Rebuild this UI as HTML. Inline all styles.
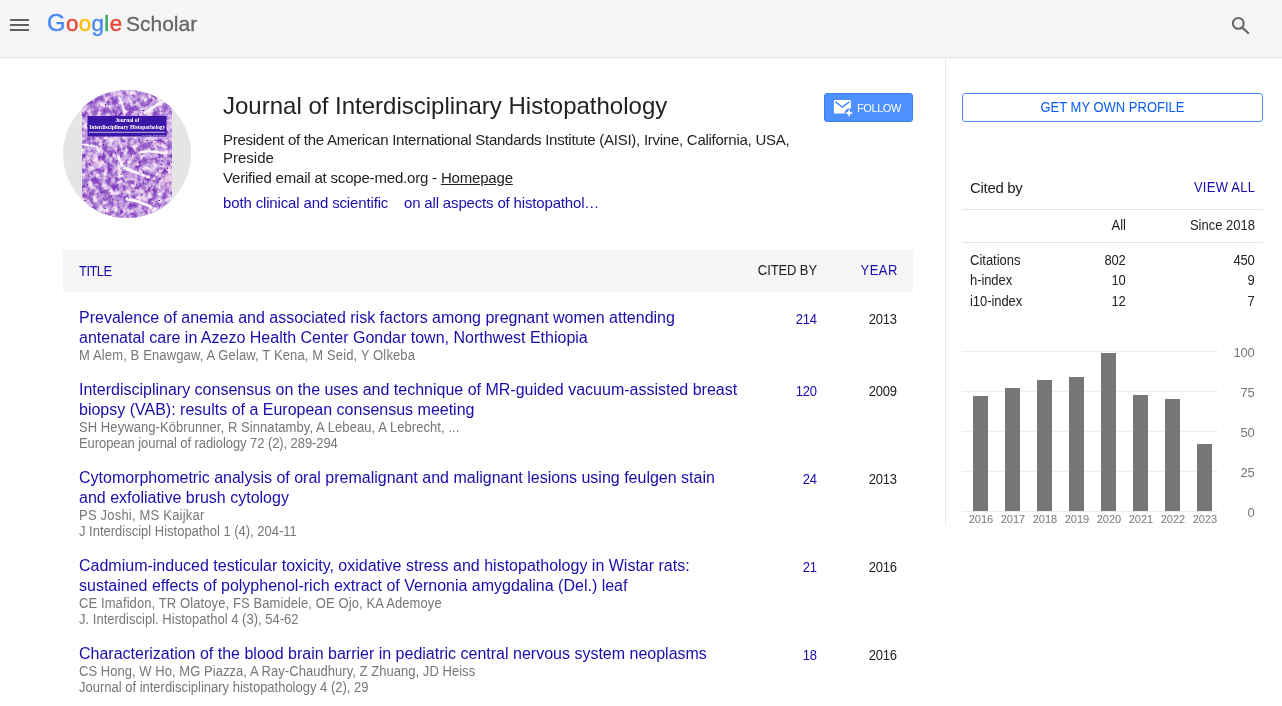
<!DOCTYPE html>
<html lang="en">
<head>
<meta charset="utf-8">
<title>Journal of Interdisciplinary Histopathology - Google Scholar</title>
<style>
html,body{margin:0;padding:0;background:#fff;}
body{opacity:0.999;width:1282px;height:706px;overflow:hidden;position:relative;font-family:"Liberation Sans",sans-serif;font-size:13px;color:#222;}
a{text-decoration:none;color:#1a0dab;}
.abs{position:absolute;white-space:nowrap;}
#hdr{position:absolute;left:0;top:0;width:1282px;height:57px;background:#f5f5f5;border-bottom:1px solid #e5e5e5;}
#logo{position:absolute;left:47px;top:0;height:57px;white-space:nowrap;}
#logo .g{position:absolute;left:0;top:8px;font-size:22.3px;line-height:30px;letter-spacing:0.4px;color:transparent;-webkit-text-stroke:0.42px transparent;background:linear-gradient(90deg,#4285f4 0px 18.6px,#ea4335 18.6px 31.4px,#fbbc05 31.4px 44.2px,#4285f4 44.2px 57.0px,#34a853 57.0px 62.4px,#ea4335 62.4px 100px);-webkit-background-clip:text;background-clip:text;padding-right:3px;}
#logo .g::first-letter{font-size:23.8px;}
#logo .s{position:absolute;left:79px;top:9px;font-size:21px;line-height:30px;color:#666;-webkit-text-stroke:0.3px #666;}
#vdiv{position:absolute;left:945px;top:58px;width:1px;height:468px;background:#ebebeb;}
/* profile */
#name{left:223px;top:90px;font-size:24px;line-height:32px;color:#222;}
.il{left:223px;font-size:15px;line-height:18px;color:#222;}
#follow{position:absolute;left:824px;top:93px;width:87px;height:27px;border:1px solid #3b80f2;border-radius:3px;background:#4d90fe;color:#fff;}
#follow span{position:absolute;left:32px;top:1px;line-height:27px;font-size:11px;letter-spacing:-0.42px;}
#getprof{position:absolute;left:962px;top:93px;width:299px;height:27px;border:1px solid #4d90fe;border-radius:3px;text-align:center;line-height:27px;font-size:13px;color:#0d5df4;}
/* table */
#thead{position:absolute;left:63px;top:250px;width:850px;height:42px;background:#f5f5f5;}
.row{position:absolute;left:63px;width:850px;}
.row .t{position:absolute;left:16px;top:8px;width:662px;font-size:16px;line-height:20px;color:#1a0dab;}
.row .g{color:#777;font-size:13px;line-height:16px;white-space:nowrap;transform:scaleY(1.07);transform-origin:0 12.5px;}
.row .c{position:absolute;right:96.3px;top:12px;letter-spacing:-0.23px;line-height:16px;color:#1a0dab;}
.row .y{position:absolute;right:16.3px;top:12px;letter-spacing:-0.23px;line-height:16px;color:#222;}
/* right */
.hl{position:absolute;left:962px;width:301px;height:1px;background:#e5e5e5;}
.r1{right:156px;}
.r2{right:27px;}
.num{letter-spacing:-0.23px;margin-right:0.5px;}
.sy,.row .c,.row .y{transform:scaleY(1.07);transform-origin:0 12.5px;}
/*CAL*/
#p1{letter-spacing:-0.260px}
#p3{letter-spacing:-0.187px}
#i1{letter-spacing:-0.144px}
#i2{letter-spacing:-0.165px}
#th1{letter-spacing:-0.55px}
#g1{letter-spacing:0.131px}
#g2{letter-spacing:0.068px}
#g3{letter-spacing:-0.080px}
#g4{letter-spacing:0.205px}
#g5{letter-spacing:-0.005px}
#g6{letter-spacing:0.096px}
#g7{letter-spacing:0.015px}
#g8{letter-spacing:0.044px}
#g9{letter-spacing:-0.007px}
#cb{letter-spacing:-0.314px}
#hi{letter-spacing:-0.083px}
#ii{letter-spacing:-0.062px}
/*ENDCAL*/
</style>
</head>
<body>
<div id="hdr">
  <svg class="abs" style="left:0;top:0" width="40" height="57" viewBox="0 0 40 57"><path d="M10 19h19v2H10zM10 24h19v2H10zM10 29h19v2H10z" fill="#606060"/></svg>
  <div id="logo"><span class="g">Google</span><span class="s">Scholar</span></div>
  <svg class="abs" style="left:1226px;top:11px" width="30" height="30" viewBox="0 0 30 30"><circle cx="12.3" cy="12.4" r="5.4" fill="none" stroke="#666" stroke-width="2"/><path d="M16.4 16.6l5.8 5.4" stroke="#666" stroke-width="2.2" stroke-linecap="round"/></svg>
</div>
<div id="vdiv"></div>

<svg id="ava" class="abs" style="left:63px;top:90px" width="128" height="128" viewBox="0 0 128 128">
  <defs>
    <clipPath id="cc"><circle cx="64" cy="64" r="64"/></clipPath>
    <clipPath id="ci2"><rect x="19" y="0" width="90" height="128"/></clipPath>
    <filter id="tex" x="0" y="0" width="100%" height="100%" color-interpolation-filters="sRGB">
      <feTurbulence type="fractalNoise" baseFrequency="0.16 0.14" numOctaves="3" seed="11"/>
      <feColorMatrix type="matrix" values="0 0 0 0 0.50  0 0 0 0 0.22  0 0 0 0 0.74  2.6 0 0 0 -1.0"/>
    </filter>
    <filter id="lite" x="0" y="0" width="100%" height="100%" color-interpolation-filters="sRGB">
      <feTurbulence type="fractalNoise" baseFrequency="0.2 0.17" numOctaves="2" seed="29"/>
      <feColorMatrix type="matrix" values="0 0 0 0 0.98  0 0 0 0 0.91  0 0 0 0 0.97  0 3 0 0 -1.25"/>
    </filter>
    <filter id="dots" x="0" y="0" width="100%" height="100%" color-interpolation-filters="sRGB">
      <feTurbulence type="fractalNoise" baseFrequency="0.5" numOctaves="1" seed="3"/>
      <feColorMatrix type="matrix" values="0 0 0 0 0.32  0 0 0 0 0.10  0 0 0 0 0.55  9 0 0 0 -6.2"/>
    </filter>
    <filter id="b1" x="-10%" y="-10%" width="120%" height="120%"><feGaussianBlur stdDeviation="1.1"/></filter>
    <filter id="b2" x="-10%" y="-10%" width="120%" height="120%"><feGaussianBlur stdDeviation="0.5"/></filter>
  </defs>
  <g clip-path="url(#cc)">
    <rect width="128" height="128" fill="#e5e5e5"/>
    <g clip-path="url(#ci2)">
      <rect x="19" y="0" width="90" height="128" fill="#cbaae6"/>
      <g filter="url(#b1)" fill="#e9c3e2" opacity="0.85">
        <ellipse cx="31" cy="71" rx="9" ry="5"/><ellipse cx="74" cy="97" rx="16" ry="3.5" transform="rotate(14 74 97)"/><ellipse cx="103" cy="88" rx="6" ry="12"/><ellipse cx="45" cy="104" rx="8" ry="4" transform="rotate(35 45 104)"/><ellipse cx="90" cy="53" rx="10" ry="3"/>
      </g>
      <g filter="url(#b1)" fill="none" stroke="#8347c0" stroke-linecap="round" opacity="0.75">
        <path d="M47 76 Q45 62 57 60 Q70 60 73 72 Q77 84 96 90" stroke-width="7"/>
        <path d="M52 88 Q72 92 98 104" stroke-width="7"/>
        <path d="M72 58 Q88 52 106 57" stroke-width="6"/>
        <path d="M76 70 Q92 72 107 68" stroke-width="5"/>
        <path d="M22 82 Q40 98 58 124" stroke-width="7"/>
        <path d="M36 80 Q52 96 72 122" stroke-width="6"/>
        <path d="M58 102 Q80 112 100 126" stroke-width="7"/>
        <path d="M21 50 Q36 50 44 60" stroke-width="6"/>
        <path d="M20 96 Q30 108 36 126" stroke-width="6"/>
        <path d="M24 12 Q40 4 52 14 T78 12" stroke-width="8"/>
        <path d="M22 24 Q50 18 74 26" stroke-width="6"/>
        <path d="M84 8 Q96 2 108 0" stroke-width="6"/>
        <path d="M92 24 Q100 18 108 16" stroke-width="5"/>
      </g>
      <rect x="19" y="0" width="90" height="128" filter="url(#tex)"/>
      <rect x="19" y="0" width="90" height="128" filter="url(#lite)"/>
      <g filter="url(#b2)" fill="none" stroke="#fbf3fb" stroke-linecap="round" stroke-linejoin="round">
        <path d="M55.5 67 Q57 74 62 78.5 Q72 82 86 87.5" stroke-width="2.4"/>
        <path d="M62 78.5 Q66 79 69 81" stroke-width="3.6"/>
        <path d="M78 62 Q90 60.5 103 63.5" stroke-width="2.6"/>
        <path d="M20 54.5 Q28 55 34 57 L36 62" stroke-width="2"/>
        <path d="M64 109 Q76 111 88 117" stroke-width="3"/>
        <path d="M82 23 Q94 14 109 7" stroke-width="3"/>
        <path d="M56 7 Q60 14 61 21" stroke-width="1.8"/>
        <path d="M30 120 Q36 123 40 128" stroke-width="2"/>
      </g>
      <rect x="19" y="0" width="90" height="128" filter="url(#dots)"/>
    </g>
    <rect x="24.5" y="26" width="79" height="20.5" fill="#3c16a6"/>
    <rect x="26" y="41.8" width="76" height="0.9" fill="#d9ccf2"/>
    <g fill="#ffffff" font-family="Liberation Serif, serif" font-weight="bold" text-anchor="middle">
      <text x="64.3" y="32.4" font-size="5.4">Journal of</text>
      <text x="64.3" y="38.6" font-size="5.4" textLength="76" lengthAdjust="spacingAndGlyphs">Interdisciplinary Histopathology</text>
      <text x="102" y="45.7" font-size="2.8" text-anchor="end" fill="#cfc0f0">E-ISSN: 2146-8362</text>
    </g>
  </g>
</svg>
<div id="name" class="abs">Journal of Interdisciplinary Histopathology</div>
<div class="abs il" style="top:131px;white-space:normal;width:590px"><span id="p1">President of the American International Standards Institute (AISI), Irvine, California, USA,</span> Preside</div>
<div class="abs il" id="p3" style="top:169px">Verified email at scope-med.org - <a style="color:#222;text-decoration:underline">Homepage</a></div>
<div class="abs il" style="top:194px"><a id="i1">both clinical and scientific</a><a id="i2" style="position:absolute;left:181px;top:0">on all aspects of histopathol…</a></div>
<div id="follow"><svg class="abs" style="left:6px;top:4px" width="24" height="20" viewBox="0 0 24 20"><rect x="2.9" y="2" width="17" height="13.4" rx="1.2" fill="#fff"/><path d="M4.4 3.9l7 5.2 7-5.2" fill="none" stroke="#4d90fe" stroke-width="1.5"/><circle cx="18.1" cy="15.2" r="4.6" fill="#4d90fe"/><path d="M18.1 12.2v6M15.1 15.2h6" stroke="#fff" stroke-width="1.7"/></svg><span>FOLLOW</span></div>
<div id="getprof"><span style="display:inline-block;transform:scaleY(1.07);transform-origin:0 18px">GET MY OWN PROFILE</span></div>

<div id="thead">
  <a class="abs sy" id="th1" style="left:16px;top:14px;line-height:16px">TITLE</a>
  <span class="abs sy" id="th2" style="right:96px;top:13px;letter-spacing:-0.1px;line-height:16px">CITED BY</span>
  <a class="abs sy" id="th3" style="right:15.2px;top:13px;letter-spacing:0.45px;line-height:16px">YEAR</a>
</div>

<div class="row" style="top:300px">
  <div class="t">Prevalence of anemia and associated risk factors among pregnant women attending antenatal care in Azezo Health Center Gondar town, Northwest Ethiopia<div class="g" id="g1">M Alem, B Enawgaw, A Gelaw, T Kena, M Seid, Y Olkeba</div></div>
  <a class="c">214</a><span class="y">2013</span>
</div>
<div class="row" style="top:372px">
  <div class="t">Interdisciplinary consensus on the uses and technique of MR-guided vacuum-assisted breast biopsy (VAB): results of a European consensus meeting<div class="g" id="g2">SH Heywang-Köbrunner, R Sinnatamby, A Lebeau, A Lebrecht, ...</div><div class="g" id="g3">European journal of radiology 72 (2), 289-294</div></div>
  <a class="c">120</a><span class="y">2009</span>
</div>
<div class="row" style="top:460px">
  <div class="t">Cytomorphometric analysis of oral premalignant and malignant lesions using feulgen stain and exfoliative brush cytology<div class="g" id="g4">PS Joshi, MS Kaijkar</div><div class="g" id="g5">J Interdiscipl Histopathol 1 (4), 204-11</div></div>
  <a class="c">24</a><span class="y">2013</span>
</div>
<div class="row" style="top:548px">
  <div class="t">Cadmium-induced testicular toxicity, oxidative stress and histopathology in Wistar rats: sustained effects of polyphenol-rich extract of Vernonia amygdalina (Del.) leaf<div class="g" id="g6">CE Imafidon, TR Olatoye, FS Bamidele, OE Ojo, KA Ademoye</div><div class="g" id="g7">J. Interdiscipl. Histopathol 4 (3), 54-62</div></div>
  <a class="c">21</a><span class="y">2016</span>
</div>
<div class="row" style="top:636px">
  <div class="t">Characterization of the blood brain barrier in pediatric central nervous system neoplasms<div class="g" id="g8">CS Hong, W Ho, MG Piazza, A Ray-Chaudhury, Z Zhuang, JD Heiss</div><div class="g" id="g9">Journal of interdisciplinary histopathology 4 (2), 29</div></div>
  <a class="c">18</a><span class="y">2016</span>
</div>

<div class="abs" id="cb" style="left:970px;top:179px;font-size:15px;line-height:18px">Cited by</div>
<a class="abs sy" style="right:26.8px;top:180px;line-height:16px;letter-spacing:0.25px">VIEW ALL</a>
<div class="hl" style="top:209px"></div>
<div class="abs r1 sy" style="top:218px;line-height:16px">All</div>
<div class="abs r2 sy" style="top:218px;line-height:16px">Since 2018</div>
<div class="hl" style="top:242px"></div>
<div class="abs sy" id="ci" style="left:970px;top:253px;line-height:16px">Citations</div><div class="abs r1 num sy" style="top:253px;line-height:16px">802</div><div class="abs r2 num sy" style="top:253px;line-height:16px">450</div>
<div class="abs sy" id="hi" style="left:970px;top:273px;line-height:16px">h-index</div><div class="abs r1 num sy" style="top:273px;line-height:16px">10</div><div class="abs r2 num sy" style="top:273px;line-height:16px">9</div>
<div class="abs sy" id="ii" style="left:970px;top:294px;line-height:16px">i10-index</div><div class="abs r1 num sy" style="top:294px;line-height:16px">12</div><div class="abs r2 num sy" style="top:294px;line-height:16px">7</div>

<svg class="abs" style="left:955px;top:340px" width="320" height="195" viewBox="955 340 320 195" font-family="Liberation Sans, sans-serif">
  <g fill="#eeeeee"><rect x="962" y="351" width="256" height="1"/><rect x="962" y="391" width="256" height="1"/><rect x="962" y="431" width="256" height="1"/><rect x="962" y="471" width="256" height="1"/><rect x="962" y="511" width="256" height="1"/></g>
  <g fill="#777777"><rect x="973" y="396" width="15" height="115"/><rect x="1005" y="388" width="15" height="123"/><rect x="1037" y="380" width="15" height="131"/><rect x="1069" y="377" width="15" height="134"/><rect x="1101" y="353" width="15" height="158"/><rect x="1133" y="395" width="15" height="116"/><rect x="1165" y="399" width="15" height="112"/><rect x="1197" y="444" width="15" height="67"/></g>
  <g fill="#777777" font-size="13" text-anchor="end" letter-spacing="-0.23"><text x="1254.5" y="356.6">100</text><text x="1254.5" y="396.6">75</text><text x="1254.5" y="436.6">50</text><text x="1254.5" y="476.6">25</text><text x="1254.5" y="516.6">0</text></g>
  <g fill="#777777" font-size="11" text-anchor="middle" transform="translate(0.4,0)"><text x="980.5" y="523">2016</text><text x="1012.5" y="523">2017</text><text x="1044.5" y="523">2018</text><text x="1076.5" y="523">2019</text><text x="1108.5" y="523">2020</text><text x="1140.5" y="523">2021</text><text x="1172.5" y="523">2022</text><text x="1204.5" y="523">2023</text></g>
</svg>
</body>
</html>
